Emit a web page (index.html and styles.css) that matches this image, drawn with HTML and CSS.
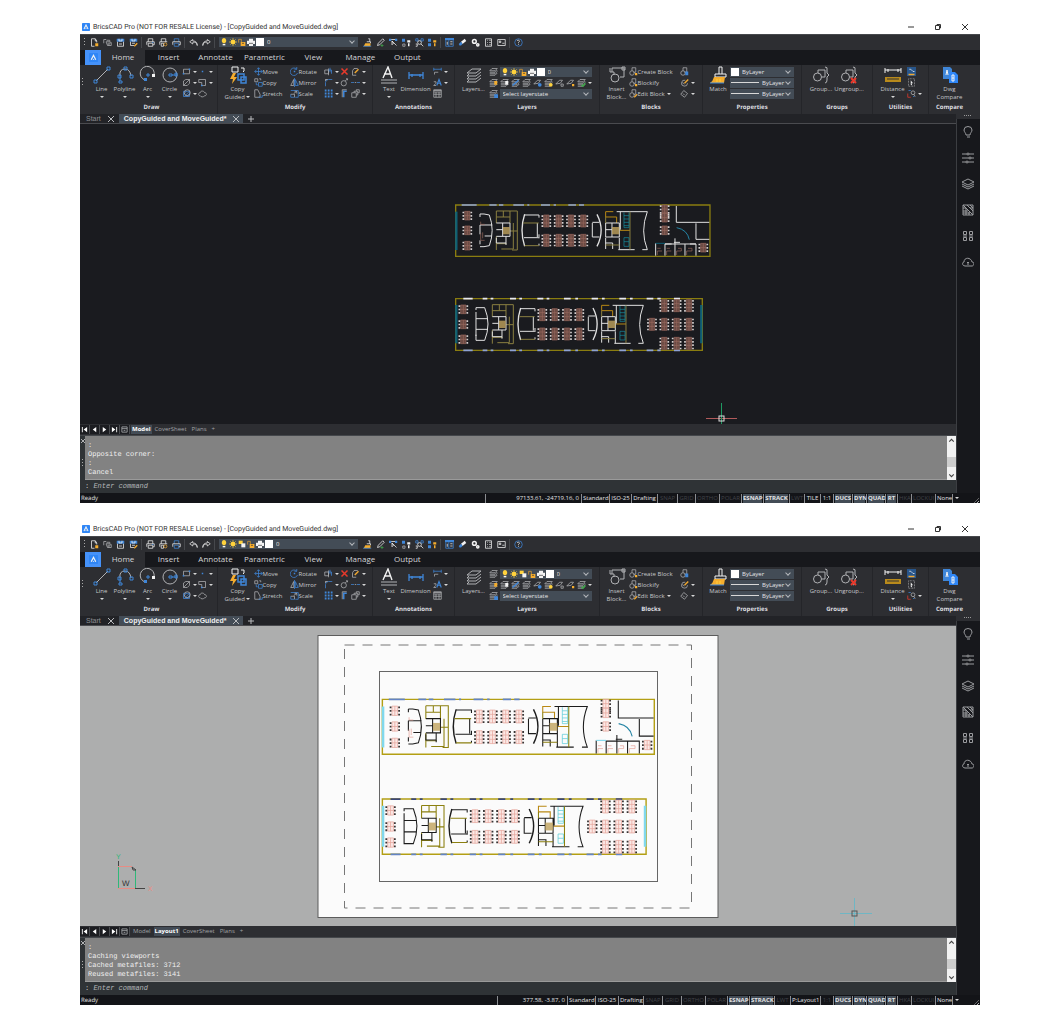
FILE: index.html
```html
<!DOCTYPE html>
<html lang="en">
<head>
<meta charset="utf-8">
<title>BricsCAD Pro</title>
<link rel="stylesheet" href="styles.css">
<script src="app.js" defer></script>
</head>
<body>

<svg class="sprite" aria-hidden="true">
  <!-- small icons, 12 x 12 -->
  <symbol id="app" viewBox="0 0 12 12"><rect class="fill-brand" width="12" height="12" rx="1"/><path class="white" stroke-width="1.6" d="M3 9l3-6 3 6M6 8v1"/></symbol>
  <symbol id="new" viewBox="0 0 12 12"><path class="white" d="M6 11H2V1h5l2 3v2M7 1v3h2"/><path class="fill-orange" d="M7 7h4v4H7z"/></symbol>
  <symbol id="open" viewBox="0 0 12 12"><path d="M1 7V2h3l1 1h4v2M4 5h4l3 1v4H6z"/><path d="M6 7h4M6 9h3"/></symbol>
  <symbol id="save" viewBox="0 0 12 12"><path class="fill-blue" d="M1 1h10v4H1z"/><path class="white" d="M2 5v6h8V5M4 1v3h4V1M4 8h4"/></symbol>
  <symbol id="saveas" viewBox="0 0 12 12"><path class="fill-blue" d="M1 1h10v4H1z"/><path class="white" d="M2 5v5h5M4 1v3h4V1M4 7h4"/><path class="orange" stroke-width="2" d="M7 11l4-4"/></symbol>
  <symbol id="print" viewBox="0 0 12 12"><path class="white" d="M3 5V1h6v4M1 9V5h10v4H9M3 7h6v4H3z"/><path class="blue" d="M8 6h2"/></symbol>
  <symbol id="preview" viewBox="0 0 12 12"><path class="white" d="M3 5V1h6v4M1 9V5h10M3 7h3v4H3z"/><circle class="orange" cx="8.500" cy="8.500" r="2"/></symbol>
  <symbol id="publish" viewBox="0 0 12 12"><path class="blue" d="M3 5V1h6v4M3 7h6v4H3z"/><path class="white" d="M1 9V5h10v4H9"/></symbol>
  <symbol id="undo" viewBox="0 0 12 12"><path class="white" d="M5 2L1 5l4 3V6c3-1 5 0 6 4 0-4-2-6-6-6z"/></symbol>
  <symbol id="redo" viewBox="0 0 12 12"><path class="white" d="M7 2l4 3-4 3V6c-3-1-5 0-6 4 0-4 2-6 6-6z"/></symbol>
  <symbol id="bulb" viewBox="0 0 12 12"><path class="fill-yellow" d="M6 0a4 4 0 00-2 7v1h4V7a4 4 0 00-2-7z"/><path class="white" stroke-width="2" d="M4 10h4"/></symbol>
  <symbol id="sun" viewBox="0 0 12 12"><circle class="fill-yellow" cx="6" cy="6" r="3.500"/><path class="yellow" d="M6 0v12M0 6h12M2 2l8 8M10 2l-8 8"/></symbol>
  <symbol id="vpfreeze" viewBox="0 0 12 12"><path class="fill-yellow" d="M1 1h6v5H1z"/><path class="fill-white" d="M5 5h6v6H5z"/></symbol>
  <symbol id="lock" viewBox="0 0 12 12"><path class="orange" d="M1 7V2h4v4"/><path class="fill-orange" d="M4 6h7v6H4z"/><path class="ink" d="M6 8h3"/></symbol>
  <symbol id="plot" viewBox="0 0 12 12"><path class="fill-white" d="M3 1h6v3h3v5H9v3H3V9H0V4h3z"/><path class="ink" d="M3 8h6"/></symbol>
  <symbol id="brush" viewBox="0 0 12 12"><path class="white" d="M7 1h2v4M5 5h5v2"/><path class="fill-orange" d="M3 7h7v4H1z"/><path class="blue" d="M0 11h11"/></symbol>
  <symbol id="pen" viewBox="0 0 12 12"><path class="white" d="M2 10l1-3 6-6 2 2-6 6z"/><path class="green" d="M8 8v4M6 10h4"/></symbol>
  <symbol id="qselect" viewBox="0 0 12 12"><path class="fill-blue" d="M0 1h3v3H0zM8 1h3v3H8z"/><path class="white" d="M3 2h5M4 4l6 6M4 4v5l2-2z"/></symbol>
  <symbol id="isolate" viewBox="0 0 12 12"><path class="fill-blue" d="M0 1h4v4H0z"/><path d="M1 8h3v3H1z"/><path class="fill-white" d="M7 3h4v3H7zM8 7h2v4H8z"/></symbol>
  <symbol id="zoomsel" viewBox="0 0 12 12"><path class="blue" d="M1 1h3v3H1zM8 1h3v3H8z"/><circle class="white" cx="6" cy="6" r="2.500"/><path class="white" d="M8 8l3 3M1 8h2v3H1"/></symbol>
  <symbol id="unisolate" viewBox="0 0 12 12"><path class="fill-blue" d="M0 1h4v4H0zM0 7h4v4H0z"/><path class="fill-orange" d="M7 3h4v3H7zM8 7h2v4H8z"/></symbol>
  <symbol id="props" viewBox="0 0 12 12"><path class="fill-blue" d="M0 0h12v3H0z"/><path class="blue" d="M1 3v8h10V3M5 3v8"/><path class="white" d="M7 5h3M7 8h3M3 5v4"/></symbol>
  <symbol id="eraser" viewBox="0 0 12 12"><path class="fill-white" d="M4 5l5-4 2 3-5 4z"/><path class="fill-blue" d="M1 8l3-3 2 3-2 2H2z"/></symbol>
  <symbol id="gear" viewBox="0 0 12 12"><circle class="white" stroke-width="2" cx="4.500" cy="4.500" r="2.500"/><circle class="white" stroke-width="2" cx="9" cy="9" r="1.500"/></symbol>
  <symbol id="list" viewBox="0 0 12 12"><path class="white" d="M2 1h8v10H2zM4 3h1M4 6h1M4 9h1M7 3h2M7 6h2M7 9h2"/></symbol>
  <symbol id="panel" viewBox="0 0 12 12"><path class="white" d="M1 2h10v8H1zM3 4h2v2H3zM7 7h3"/></symbol>
  <symbol id="help" viewBox="0 0 12 12"><circle class="blue" cx="6" cy="6" r="5"/><path class="white" d="M4 4c1-2 4-1 3 1L6 6v1M6 8v1"/></symbol>

  <symbol id="rect" viewBox="0 0 12 12"><path d="M2 3h8v6H2z"/><path class="fill-blue" d="M1 8h2v2H1zM9 2h2v2H9z"/></symbol>
  <symbol id="point" viewBox="0 0 12 12"><path class="fill-blue" d="M5 5h2v2H5z"/></symbol>
  <symbol id="ellipse" viewBox="0 0 12 12"><path d="M2 10V4l3-2h5v5L7 10zM2 10l8-8"/></symbol>
  <symbol id="region" viewBox="0 0 12 12"><path d="M1 2h9v8H7M1 2v4h4v4h2"/><path class="fill-blue" d="M4 9h2v2H4z"/></symbol>
  <symbol id="hatch" viewBox="0 0 12 12"><path class="blue" d="M2 3h8v7H2zM2 7l4-4M3 10l7-7M6 10l4-4"/><circle cx="7" cy="5" r="4"/></symbol>
  <symbol id="cloud" viewBox="0 0 12 12"><path d="M3 9C0 9 0 5 3 5c0-3 5-3 6 0 3 0 3 4 0 4-2 2-5 2-6 0z"/></symbol>

  <symbol id="move" viewBox="0 0 12 12"><path class="blue" d="M6 1v10M1 6h10M4 3l2-2 2 2M4 9l2 2 2-2M3 4L1 6l2 2M9 4l2 2-2 2"/></symbol>
  <symbol id="copy" viewBox="0 0 12 12"><path d="M1 1h4v4H1zM7 1h2v2"/><path class="blue" d="M6 6h5v5H6zM3 6v3h2"/></symbol>
  <symbol id="stretch" viewBox="0 0 12 12"><path d="M1 11V1h4l3 6v4z"/><path class="blue" d="M6 11h5V8"/></symbol>
  <symbol id="rotate" viewBox="0 0 12 12"><path class="blue" d="M10 8a5 5 0 11-1-5M9 0v3H6"/><path class="fill-blue" d="M5 5h2v2H5z"/></symbol>
  <symbol id="mirror" viewBox="0 0 12 12"><path d="M5 2v8H1z"/><path class="blue" d="M7 2v8h4zM6 0v12"/></symbol>
  <symbol id="scale" viewBox="0 0 12 12"><path class="blue" d="M1 7v4h5M1 2h10v9H7"/><path d="M1 7h5v4M5 6l4-3M6 3h3v3"/></symbol>
  <symbol id="trim" viewBox="0 0 12 12"><path d="M1 4h5v5H1zM6 2v9"/><path class="blue" d="M6 4h4v5M8 1v6"/></symbol>
  <symbol id="delete" viewBox="0 0 12 12"><path class="red" stroke-width="2" d="M2 2l8 8M10 2l-8 8"/></symbol>
  <symbol id="edit" viewBox="0 0 12 12"><path d="M9 2H4L2 5v6h5"/><path class="orange" stroke-width="2" d="M5 8l5-5"/></symbol>
  <symbol id="fillet" viewBox="0 0 12 12"><path class="blue" d="M2 11V6q0-4 4-4h5"/><path d="M2 2h1M2 4V2h3"/></symbol>
  <symbol id="offset" viewBox="0 0 12 12"><circle cx="5" cy="7" r="3.500"/><path d="M7 4l3-3M8 1h2v2"/></symbol>
  <symbol id="break" viewBox="0 0 12 12"><path class="blue" d="M0 6h4M8 6h4"/><path d="M5 6h2"/></symbol>
  <symbol id="array" viewBox="0 0 12 12"><path class="blue" stroke-width="2.400" stroke-dasharray="2.400 1.600" d="M1 2h11M1 6h11M1 10h11"/></symbol>
  <symbol id="align" viewBox="0 0 12 12"><path class="blue" stroke-width="2" d="M5 11V3h4"/><path d="M3 11V1h6"/></symbol>
  <symbol id="explode" viewBox="0 0 12 12"><path d="M1 5h6v6H1zM4 5V3h5v5H7M7 3V1h4v4H9"/></symbol>

  <symbol id="leader" viewBox="0 0 12 12"><path class="blue" d="M1 1v4M11 1v4M1 3h10"/><path d="M2 10V7h5"/></symbol>
  <symbol id="textstyle" viewBox="0 0 12 12"><path d="M1 5h3v2L1 10h3"/><path class="blue" stroke-width="1.500" d="M5 10l3-8 3 8M6 7h4"/></symbol>
  <symbol id="table" viewBox="0 0 12 12"><path d="M1 1h10v10H1zM1 4h10M1 7h10M4 4v7M8 4v7"/><path d="M1 2h10"/></symbol>

  <symbol id="lay" viewBox="0 0 12 12"><path d="M4 2h7L8 5H1zM1 7h7l3-3M1 9h7l3-3M1 11h7l3-3"/></symbol>
  <symbol id="lay-o" viewBox="0 0 12 12"><use href="#lay"/><path class="fill-orange" d="M7 4h4v5H7z"/></symbol>
  <symbol id="lay-w" viewBox="0 0 12 12"><use href="#lay"/><path class="fill-white" d="M7 4h4v5H7z"/></symbol>
  <symbol id="lay-b" viewBox="0 0 12 12"><use href="#lay"/><path class="blue" stroke-width="2" d="M2 10l8-7"/></symbol>
  <symbol id="lay-f" viewBox="0 0 12 12"><path d="M1 8l5-5h4L7 7z"/><circle class="fill-blue" cx="9" cy="9" r="2.500"/></symbol>
  <symbol id="lay-y" viewBox="0 0 12 12"><use href="#lay"/><circle class="fill-yellow" cx="9" cy="9" r="2.500"/></symbol>
  <symbol id="lay-l" viewBox="0 0 12 12"><path d="M1 8l5-5h4L7 7z"/><path d="M8 8h3v3H8z"/></symbol>
  <symbol id="lay-u" viewBox="0 0 12 12"><path d="M1 8l5-5h4L7 7z"/><path class="fill-orange" d="M8 8h3v3H8z"/></symbol>
  <symbol id="lay-g" viewBox="0 0 12 12"><use href="#lay"/><path class="green" stroke-width="2" d="M6 9l2 2 3-4"/></symbol>
  <symbol id="lay-s" viewBox="0 0 12 12"><use href="#lay"/><path class="fill-blue" d="M7 7h5v5H7z"/></symbol>

  <symbol id="block" viewBox="0 0 12 12"><circle cx="4" cy="8" r="3"/><path d="M4 1h5v6H6M4 1v4"/></symbol>
  <symbol id="block-n" viewBox="0 0 12 12"><use href="#block"/><path class="fill-orange" d="M8 8h3v3H8z"/></symbol>
  <symbol id="block-e" viewBox="0 0 12 12"><use href="#block"/><path class="orange" stroke-width="2" d="M7 11l4-4"/></symbol>
  <symbol id="block-b" viewBox="0 0 12 12"><use href="#block"/><path class="fill-blue" d="M7 6h4v5H7z"/></symbol>
  <symbol id="tag" viewBox="0 0 12 12"><path d="M1 7l4-5 5 4-4 5zM4 6l2 2"/></symbol>
  <symbol id="tag-e" viewBox="0 0 12 12"><path d="M10 7a4 4 0 11-3-4M3 6l3 2"/><path class="orange" stroke-width="2" d="M6 7l5-5"/></symbol>

  <symbol id="qcalc" viewBox="0 0 12 12"><path class="fill-deep" d="M0 0h12v12H0z"/><path class="white" d="M3 3h2M5 3l3 3h2"/><path class="orange" stroke-width="2" d="M2 10h8"/></symbol>
  <symbol id="pick" viewBox="0 0 12 12"><path d="M2 1h8v10H2z" stroke-dasharray="1 1"/><path class="fill-white" d="M5 3l3 4H6l1 3-2-1z"/></symbol>
  <symbol id="find" viewBox="0 0 12 12"><path class="red" d="M1 6v5h4"/><path class="blue" d="M2 2h3M8 10h2"/><circle cx="8" cy="5" r="2.500"/><path d="M9 7l2 3"/></symbol>

  <!-- large icons, 18 x 18 -->
  <symbol id="line" viewBox="0 0 18 18"><path d="M3 15L15 3"/><path class="blue" d="M1 14h3v3H1zM14 1h3v3h-3z"/></symbol>
  <symbol id="polyline" viewBox="0 0 18 18"><path d="M4 10Q3 3 9 3q5 0 6 7"/><path class="blue" d="M4 10v5M2 9h3v3H2zM8 1h3v3H8zM14 9h3v3h-3zM3 15h3v2H3z"/></symbol>
  <symbol id="arc" viewBox="0 0 18 18"><path d="M6 14A7 7 0 1115 9"/><path class="blue" d="M8 8h2v2H8z"/><path class="fill-white" d="M13 8h3v3h-3z"/><path class="fill-blue" d="M5 12h3v3H5z"/></symbol>
  <symbol id="circle" viewBox="0 0 18 18"><circle cx="9" cy="9" r="7"/><path class="blue" d="M8 8h3v2H8zM11 9h5M14 7h2v3h-2z"/></symbol>
  <symbol id="copyguided" viewBox="0 0 18 18"><path class="white" d="M3 1h6v5H3zM12 2h3v3M14 6l1-1"/><path class="fill-orange" d="M4 7L1 13h3l-1 5 5-7H5l2-4z"/><path class="blue" stroke-width="1.500" d="M9 8h6v6H9zM12 11h5v6h-5z"/></symbol>
  <symbol id="text" viewBox="0 0 18 18"><path class="white" stroke-width="1.400" d="M3 12L8 1l4 11M4 8h7"/><path d="M1 14h16M1 17h16"/></symbol>
  <symbol id="dimension" viewBox="0 0 18 18"><path class="blue" stroke-width="1.300" d="M2 6v7M16 6v7M2 9h14M5 8v3M13 8v3"/></symbol>
  <symbol id="layers" viewBox="0 0 18 18"><path d="M7 3h9l-5 4H2zM16 6l-5 4H2l2-2M16 9l-5 4H2l2-2M16 12l-5 4H2l2-2"/></symbol>
  <symbol id="insert" viewBox="0 0 18 18"><path d="M4 2h12v9h-4M4 2v4M2 6h4v3M2 2v4"/><circle cx="7" cy="12" r="4"/><path d="M14 1h3v3h-3z"/></symbol>
  <symbol id="match" viewBox="0 0 18 18"><path class="white" d="M10 1h3v7M10 1v7M6 8h11v3H6z"/><path class="fill-orange" d="M5 11h11l-1 6H1q3-2 4-6z"/><path class="yellow" d="M8 13v3M11 13v3"/><path class="blue" d="M1 17h14"/></symbol>
  <symbol id="group" viewBox="0 0 18 18"><circle cx="5.500" cy="11" r="4"/><path d="M6 4h7v7h-3M6 4v3M13 1q3 0 2 3v3l2 2-2 2v3q0 3-2 3"/></symbol>
  <symbol id="ungroup" viewBox="0 0 18 18"><use href="#group"/><path class="red" stroke-width="2" d="M11 12l5 5M16 12l-5 5"/></symbol>
  <symbol id="distance" viewBox="0 0 18 18"><path class="white" d="M1 2v5M17 2v5M1 4h16M4 3v3M14 3v3"/><path class="fill-ochre" d="M1 11h16v5H1z"/><path class="ink" d="M3 13h12"/></symbol>
  <symbol id="compare" viewBox="0 0 18 18"><path class="fill-blue" d="M2 1h7l2 2v10H2z"/><path class="fill-brand" d="M8 6h6l3 3v8H8z"/><path class="white" d="M5 9l1-5 1 5M11 9h2v6h-2zM11 12h2"/></symbol>

  <!-- side panel icons, 12 x 12 -->
  <symbol id="s-bulb" viewBox="0 0 12 12"><path d="M4 9C4 7 2 6 2 4a4 3.500 0 018 0c0 2-2 3-2 5zM5 11h3"/></symbol>
  <symbol id="s-sliders" viewBox="0 0 12 12"><path d="M0 2h5M7 2h5M0 6h7M9 6h3M0 10h4M6 10h6"/><circle cx="6" cy="2" r="1"/><circle cx="8" cy="6" r="1"/><circle cx="5" cy="10" r="1"/></symbol>
  <symbol id="s-layers" viewBox="0 0 12 12"><path d="M6 1l6 3-6 3-6-3zM0 6l6 3 6-3M0 8l6 3 6-3"/></symbol>
  <symbol id="s-hatch" viewBox="0 0 12 12"><path d="M1 1h10v10H1zM1 1l10 10M5 1l6 6M1 4h3M1 7h5M1 9h7M4 4v7M7 8v3M8 1l3 3M8 4h3"/></symbol>
  <symbol id="s-blocks" viewBox="0 0 12 12"><path d="M1.500 1.500h3v3h-3zM7.500 1.500h3v3h-3zM1.500 7.500h3v3h-3zM7.500 7.500h3v3h-3zM1 6h4M7 6h4"/></symbol>
  <symbol id="s-cloud" viewBox="0 0 12 12"><path d="M3 10C0 10 0 6 2 6c0-5 7-5 8 0 3 0 2 4 0 4zM6 9V6M5 7l1-1 1 1"/></symbol>

  <!-- desk clusters, centred on the origin -->
  <g id="desk4">
    <path class="desk top" d="M-8-18H8V18H-8zM0-18V18M-8-6H8M-8 6H8"/>
    <path class="seat" d="M-12-17V20M12-17V20"/>
  </g>
  <g id="desk3">
    <path class="desk top" d="M-8-13H8V13H-8zM0-13V13M-8 0H8"/>
    <path class="seat" d="M-12-12V14M12-12V14"/>
  </g>

  <!-- rooms common to both floors -->
  <g id="rooms">
    <path class="olive" d="M139 48H202V165H186M139 48V84M180 48V84M139 66H180M160 48V66M180 108H202M139 124V165M139 146H170M190 84V162H154"/>
    <path class="wall" d="M139 84H180V124H139M158 84V124M139 104H158M139 128V144H168M168 124V150"/>
    <path class="stair" d="M159 96h20v22h-20z"/>
    <path class="wall thick" d="M224 58Q208 106 224 154"/>
    <path class="wall" d="M224 60H267V68M262 84V126M267 118V130M222 128H266M267 146V152"/>
    <path class="olive" d="M220 84H266M224 152H267"/>
    <use href="#desk4" x="289" y="78"/><use href="#desk4" x="326" y="78"/><use href="#desk4" x="363" y="78"/><use href="#desk4" x="400" y="78"/>
    <use href="#desk4" x="289" y="136"/><use href="#desk4" x="326" y="136"/><use href="#desk4" x="363" y="136"/><use href="#desk4" x="400" y="136"/>
    <path class="wall" d="M427 84V126H448M427 82H448"/>
    <path class="wall thick" d="M441 58Q466 106 441 154"/>
    <path class="amber" d="M490 50H467V66H500V84M509 106H540"/>
    <path class="wall" d="M467 84H508V126H467V84M486 84V126M467 104H486M467 128V162M467 144H488V162M500 50H592Q570 108 592 164H577M505 164H554M508 128V164M511 50V104"/>
    <path class="olive" d="M467 66V84M467 150H508M540 50V164"/>
    <path class="stair" d="M486 96h22v22h-22z"/>
    <path class="cyan" d="M522 52V98H537V52M522 62H537M522 72H537M522 82H537M522 92H537M522 128H537V154H522zM522 140H537"/>
  </g>

  <g id="floor-a">
    <path class="shell" d="M17 30H780V184H17z"/>
    <path class="glazing" d="M35 30H80M118 30H140M147 30H160M190 30H222M232 30H238M273 30H300M311 30H318M355 30H378M387 30H402"/>
    <path class="pane" d="M19 50V165"/>
    <use href="#desk3" x="52" y="62"/><use href="#desk3" x="52" y="106"/><use href="#desk3" x="52" y="152"/>
    <path class="wall" d="M90 57H102L118 60Q135 106 118 152L102 155H90M90 57V66M90 90H127M90 90V118M104 123H125M90 136V148"/>
    <path class="desk" d="M92 80V88H104M92 114V136H104M98 112V130"/>
    <use href="#rooms"/>
    <use href="#desk4" x="644" y="48"/><use href="#desk3" x="644" y="68"/><use href="#desk3" x="644" y="106"/>
    <path class="wall" d="M679 33V82H778M738 85V133H778M617 182V145M645 182V147H665M675 182V130M672 142H690M705 182V147M738 182V147H720M645 147H738"/>
    <path class="pane thin" d="M617 145H645"/>
    <path class="arc" d="M680 98Q712 104 718 134"/>
    <path class="desk" d="M622 180V168H636M622 160H632M650 180V168H664M650 160H660M680 180V168H694V160H684M710 180V168H726V160H714"/>
    <use href="#desk3" x="760" y="158"/>
  </g>

  <g id="floor-b">
    <path class="shell" d="M17 26H757V181H17z"/>
    <path class="glazing alt" d="M40 26H68M98 26H112M122 26H130M180 26H198M208 26H216M262 26H280M290 26H298M342 26H362M376 26H384M425 26H444M456 26H464M508 26H528M540 26H548M590 26H610M622 26H632M672 26H690"/>
    <path class="glazing" d="M40 181H68M98 181H112M122 181H130M180 181H198M208 181H216M262 181H280M290 181H298M342 181H362M376 181H384M425 181H444M456 181H464M508 181H528M540 181H548M590 181H610M622 181H632M672 181H690"/>
    <path class="pane" d="M19 45V160M754 45V160"/>
    <use href="#desk3" x="40" y="58"/><use href="#desk3" x="40" y="103"/><use href="#desk3" x="40" y="148"/>
    <path class="wall" d="M78 60V53H104Q124 102 104 151H78V134M78 66V138M78 86H114M78 118H114"/>
    <use href="#rooms" x="-12" y="-4"/>
    <use href="#desk4" x="606" y="103"/>
    <use href="#desk4" x="643" y="47"/><use href="#desk4" x="680" y="47"/><use href="#desk4" x="717" y="47"/>
    <use href="#desk4" x="643" y="103"/><use href="#desk4" x="680" y="103"/><use href="#desk4" x="717" y="103"/>
    <use href="#desk4" x="643" y="160"/><use href="#desk4" x="680" y="160"/><use href="#desk4" x="717" y="160"/>
  </g>
</svg>

<!-- title bar, toolbar and ribbon, shared by every drawing window -->
<template id="chrome">
  <header class="titlebar">
    <svg class="app-icon"><use href="#app"/></svg>
    <h2 class="title">BricsCAD Pro (NOT FOR RESALE License) - [CopyGuided and MoveGuided.dwg]</h2>
    <div class="window-buttons">
      <button aria-label="Minimize"><svg viewBox="0 0 8 8"><path d="M1 4h6"/></svg></button>
      <button aria-label="Restore"><svg viewBox="0 0 8 8"><path d="M1.500 2.500h4v4h-4zM3 2V1.500h3.500V5H6"/></svg></button>
      <button aria-label="Close"><svg viewBox="0 0 8 8"><path d="M1 1l6 6M7 1L1 7"/></svg></button>
    </div>
  </header>

  <div class="toolbar">
    <span class="grip"></span>
    <button class="tool" aria-label="New"><svg><use href="#new"/></svg></button>
    <button class="tool" aria-label="Open"><svg><use href="#open"/></svg></button>
    <button class="tool" aria-label="Save"><svg><use href="#save"/></svg></button>
    <button class="tool" aria-label="Save as"><svg><use href="#saveas"/></svg></button>
    <span class="divider"></span>
    <button class="tool" aria-label="Print"><svg><use href="#print"/></svg></button>
    <button class="tool" aria-label="Print preview"><svg><use href="#preview"/></svg></button>
    <button class="tool" aria-label="Publish"><svg><use href="#publish"/></svg></button>
    <span class="divider"></span>
    <button class="tool" aria-label="Undo"><svg><use href="#undo"/></svg></button>
    <button class="tool" aria-label="Redo"><svg><use href="#redo"/></svg></button>
    <span class="divider"></span>
    <div class="combo combo-wide">
      <svg><use href="#bulb"/></svg><svg><use href="#sun"/></svg><svg class="vp-only"><use href="#vpfreeze"/></svg><svg><use href="#lock"/></svg><svg><use href="#plot"/></svg><i class="swatch"></i>
      <select aria-label="Current layer"><option>0</option></select>
    </div>
    <button class="tool" aria-label="Match properties"><svg><use href="#brush"/></svg></button>
    <button class="tool" aria-label="Edit"><svg><use href="#pen"/></svg></button>
    <button class="tool" aria-label="Quick select"><svg><use href="#qselect"/></svg></button>
    <button class="tool" aria-label="Isolate"><svg><use href="#isolate"/></svg></button>
    <button class="tool" aria-label="Zoom to selection"><svg><use href="#zoomsel"/></svg></button>
    <button class="tool" aria-label="Show all"><svg><use href="#unisolate"/></svg></button>
    <span class="divider"></span>
    <button class="tool" aria-label="Properties"><svg><use href="#props"/></svg></button>
    <button class="tool" aria-label="Purge"><svg><use href="#eraser"/></svg></button>
    <button class="tool" aria-label="Settings"><svg><use href="#gear"/></svg></button>
    <button class="tool" aria-label="Explorer"><svg><use href="#list"/></svg></button>
    <button class="tool" aria-label="Customize"><svg><use href="#panel"/></svg></button>
    <span class="divider"></span>
    <button class="tool" aria-label="Help"><svg><use href="#help"/></svg></button>
  </div>

  <nav class="ribbon-tabs">
    <button class="logo" aria-label="Application menu"><svg><use href="#app"/></svg></button>
    <button class="ribbon-tab is-active">Home</button>
    <button class="ribbon-tab">Insert</button>
    <button class="ribbon-tab">Annotate</button>
    <button class="ribbon-tab">Parametric</button>
    <button class="ribbon-tab">View</button>
    <button class="ribbon-tab">Manage</button>
    <button class="ribbon-tab">Output</button>
  </nav>

  <div class="ribbon">
    <span class="grip"></span>
    <section class="group g-draw">
      <div class="tools">
        <button class="big"><svg><use href="#line"/></svg>Line<i class="caret"></i></button>
        <button class="big"><svg><use href="#polyline"/></svg>Polyline<i class="caret"></i></button>
        <button class="big"><svg><use href="#arc"/></svg>Arc<i class="caret"></i></button>
        <button class="big"><svg><use href="#circle"/></svg>Circle<i class="caret"></i></button>
        <div class="stack">
          <button class="small" aria-label="Rectangle"><svg><use href="#rect"/></svg><i class="caret"></i></button>
          <button class="small" aria-label="Ellipse"><svg><use href="#ellipse"/></svg><i class="caret"></i></button>
          <button class="small" aria-label="Hatch"><svg><use href="#hatch"/></svg><i class="caret"></i></button>
        </div>
        <div class="stack">
          <button class="small" aria-label="Point"><svg><use href="#point"/></svg><i class="caret"></i></button>
          <button class="small" aria-label="Region"><svg><use href="#region"/></svg><i class="caret"></i></button>
          <button class="small" aria-label="Revision cloud"><svg><use href="#cloud"/></svg></button>
        </div>
      </div>
      <h3>Draw</h3>
    </section>

    <section class="group g-modify">
      <div class="tools">
        <button class="big"><svg><use href="#copyguided"/></svg>Copy<span>Guided <i class="caret"></i></span></button>
        <div class="stack">
          <button class="small"><svg><use href="#move"/></svg>Move</button>
          <button class="small"><svg><use href="#copy"/></svg>Copy</button>
          <button class="small"><svg><use href="#stretch"/></svg>Stretch</button>
        </div>
        <div class="stack">
          <button class="small"><svg><use href="#rotate"/></svg>Rotate</button>
          <button class="small"><svg><use href="#mirror"/></svg>Mirror</button>
          <button class="small"><svg><use href="#scale"/></svg>Scale</button>
        </div>
        <div class="stack">
          <button class="small" aria-label="Trim"><svg><use href="#trim"/></svg><i class="caret"></i></button>
          <button class="small" aria-label="Fillet"><svg><use href="#fillet"/></svg><i class="caret"></i></button>
          <button class="small" aria-label="Array"><svg><use href="#array"/></svg><i class="caret"></i></button>
        </div>
        <div class="stack">
          <button class="small" aria-label="Erase"><svg><use href="#delete"/></svg></button>
          <button class="small" aria-label="Offset"><svg><use href="#offset"/></svg></button>
          <button class="small" aria-label="Align"><svg><use href="#align"/></svg></button>
        </div>
        <div class="stack">
          <button class="small" aria-label="Edit polyline"><svg><use href="#edit"/></svg><i class="caret"></i></button>
          <button class="small" aria-label="Break"><svg><use href="#break"/></svg><i class="caret"></i></button>
          <button class="small" aria-label="Explode"><svg><use href="#explode"/></svg><i class="caret"></i></button>
        </div>
      </div>
      <h3>Modify</h3>
    </section>

    <section class="group g-annotations">
      <div class="tools">
        <button class="big"><svg><use href="#text"/></svg>Text<i class="caret"></i></button>
        <button class="big"><svg><use href="#dimension"/></svg>Dimension</button>
        <div class="stack">
          <button class="small" aria-label="Leader"><svg><use href="#leader"/></svg><i class="caret"></i></button>
          <button class="small" aria-label="Text style"><svg><use href="#textstyle"/></svg><i class="caret"></i></button>
          <button class="small" aria-label="Table"><svg><use href="#table"/></svg></button>
        </div>
      </div>
      <h3>Annotations</h3>
    </section>

    <section class="group g-layers">
      <div class="tools">
        <button class="big"><svg><use href="#layers"/></svg>Layers...</button>
        <div class="stack">
          <div class="row">
            <button class="small" aria-label="Set layer"><svg><use href="#lay"/></svg></button>
            <div class="combo">
              <svg><use href="#bulb"/></svg><svg><use href="#sun"/></svg><svg class="vp-only"><use href="#vpfreeze"/></svg><svg><use href="#lock"/></svg><svg><use href="#plot"/></svg><i class="swatch"></i>
              <select aria-label="Layer"><option>0</option></select>
            </div>
          </div>
          <div class="row spread">
            <button class="small" aria-label="Layer off"><svg><use href="#lay-o"/></svg></button>
            <button class="small" aria-label="Layers on"><svg><use href="#lay-w"/></svg></button>
            <button class="small" aria-label="Isolate layer"><svg><use href="#lay-b"/></svg></button>
            <button class="small" aria-label="Unisolate layer"><svg><use href="#lay"/></svg></button>
            <button class="small" aria-label="Freeze layer"><svg><use href="#lay-f"/></svg></button>
            <button class="small" aria-label="Thaw layers"><svg><use href="#lay-y"/></svg></button>
            <button class="small" aria-label="Lock layer"><svg><use href="#lay-l"/></svg></button>
            <button class="small" aria-label="Unlock layer"><svg><use href="#lay-u"/></svg></button>
            <button class="small" aria-label="Layer tools"><svg><use href="#lay-g"/></svg><i class="caret"></i></button>
          </div>
          <div class="row">
            <button class="small" aria-label="Layer states"><svg><use href="#lay-s"/></svg></button>
            <div class="combo"><select aria-label="Layer state"><option>Select layerstate</option></select></div>
          </div>
        </div>
      </div>
      <h3>Layers</h3>
    </section>

    <section class="group g-blocks">
      <div class="tools">
        <button class="big"><svg><use href="#insert"/></svg>Insert<span>Block...</span></button>
        <div class="stack">
          <button class="small"><svg><use href="#block-n"/></svg>Create Block</button>
          <button class="small"><svg><use href="#block-n"/></svg>Blockify</button>
          <button class="small"><svg><use href="#block-e"/></svg>Edit Block<i class="caret"></i></button>
        </div>
        <div class="stack">
          <button class="small" aria-label="Write block"><svg><use href="#block-b"/></svg></button>
          <button class="small" aria-label="Edit attributes"><svg><use href="#tag-e"/></svg><i class="caret"></i></button>
          <button class="small" aria-label="Define attributes"><svg><use href="#tag"/></svg><i class="caret"></i></button>
        </div>
      </div>
      <h3>Blocks</h3>
    </section>

    <section class="group g-properties">
      <div class="tools">
        <button class="big"><svg><use href="#match"/></svg>Match</button>
        <div class="stack">
          <div class="combo"><i class="swatch"></i><select aria-label="Color"><option>ByLayer</option></select></div>
          <div class="combo"><i class="rule"></i><select aria-label="Linetype"><option>ByLayer</option></select></div>
          <div class="combo"><i class="rule"></i><select aria-label="Lineweight"><option>ByLayer</option></select></div>
        </div>
      </div>
      <h3>Properties</h3>
    </section>

    <section class="group g-groups">
      <div class="tools">
        <button class="big"><svg><use href="#group"/></svg>Group...</button>
        <button class="big"><svg><use href="#ungroup"/></svg>Ungroup...</button>
      </div>
      <h3>Groups</h3>
    </section>

    <section class="group g-utilities">
      <div class="tools">
        <button class="big"><svg><use href="#distance"/></svg>Distance<i class="caret"></i></button>
        <div class="stack">
          <button class="small" aria-label="Quick properties"><svg><use href="#qcalc"/></svg></button>
          <button class="small" aria-label="Select"><svg><use href="#pick"/></svg></button>
          <button class="small" aria-label="Find"><svg><use href="#find"/></svg><i class="caret"></i></button>
        </div>
      </div>
      <h3>Utilities</h3>
    </section>

    <section class="group g-compare">
      <div class="tools">
        <button class="big"><svg><use href="#compare"/></svg>Dwg<span>Compare</span></button>
      </div>
      <h3>Compare</h3>
    </section>
  </div>
</template>

<template id="side">
  <span class="dots"></span>
  <div class="side-buttons">
    <button aria-label="Tips"><svg><use href="#s-bulb"/></svg></button>
    <button aria-label="Properties"><svg><use href="#s-sliders"/></svg></button>
    <button aria-label="Layers"><svg><use href="#s-layers"/></svg></button>
    <button aria-label="Hatches"><svg><use href="#s-hatch"/></svg></button>
    <button aria-label="Blocks"><svg><use href="#s-blocks"/></svg></button>
    <button aria-label="Cloud"><svg><use href="#s-cloud"/></svg></button>
  </div>
</template>

<template id="doctabs">
  <button class="doc-tab">Start</button><button class="doc-close" aria-label="Close Start"><svg viewBox="0 0 6 6"><path d="M0 0l6 6M6 0L0 6"/></svg></button>
  <div class="doc-active"><button class="doc-tab is-active">CopyGuided and MoveGuided*</button><button class="doc-close" aria-label="Close drawing"><svg viewBox="0 0 6 6"><path d="M0 0l6 6M6 0L0 6"/></svg></button></div>
  <button class="doc-add" aria-label="New tab"><svg viewBox="0 0 6 6"><path d="M3 0v6M0 3h6"/></svg></button>
</template>

<template id="layoutnav">
  <button aria-label="First"><svg viewBox="0 0 8 8"><path d="M1 1h1v6H1zM7 1v6L3 4z"/></svg></button>
  <button aria-label="Previous"><svg viewBox="0 0 8 8"><path d="M6 1v6L2 4z"/></svg></button>
  <button aria-label="Next"><svg viewBox="0 0 8 8"><path d="M2 1v6l4-3z"/></svg></button>
  <button aria-label="Last"><svg viewBox="0 0 8 8"><path d="M6 1h1v6H6zM1 1v6l4-3z"/></svg></button>
  <button aria-label="Layout list"><svg class="outline" viewBox="0 0 8 8"><path d="M1 1h6v6H1zM1 3h6M3 5h2"/></svg></button>
</template>

<template id="scroll">
  <button aria-label="Scroll up"><svg viewBox="0 0 8 8"><path d="M2 5l2-2 2 2"/></svg></button>
  <span class="thumb"></span>
  <button aria-label="Scroll down"><svg viewBox="0 0 8 8"><path d="M2 3l2 2 2-2"/></svg></button>
</template>

<main class="page">
  <article class="window window-model">
    <div data-template="chrome"></div>
    <div class="work">
      <div class="drawing">
        <div class="doc-tabs" data-template="doctabs"></div>
        <svg class="canvas" viewBox="0 0 876 300" role="img" aria-label="Model space">
          <g transform="translate(370 71) scale(.3333)"><use href="#floor-a"/></g>
          <g transform="translate(370 166) scale(.3333)"><use href="#floor-b"/></g>
          <path class="cursor-x" d="M626 294.500H657"/>
          <path class="cursor-y" d="M641.500 279V300"/>
          <rect class="cursor-box" x="639" y="292" width="5" height="5"/>
        </svg>
        <div class="layout-tabs">
          <div class="layout-nav" data-template="layoutnav"></div>
          <button class="is-active">Model</button><button>CoverSheet</button><button>Plans</button><button>+</button>
        </div>
        <div class="console">
          <div class="gutter"><svg viewBox="0 0 4 4"><path d="M0 0l4 4M4 0L0 4"/></svg><span class="grip"></span></div>
          <pre class="log">:
Opposite corner:
:
Cancel</pre>
          <div class="scrollbar" data-template="scroll"></div>
          <label class="prompt">: <input type="text" placeholder="Enter command"></label>
        </div>
      </div>
      <aside class="side" data-template="side"></aside>
    </div>
    <footer class="status status-model">
      <span class="ready">Ready</span>
      <button class="coords">97133.61, -24719.16, 0</button><button>Standard</button><button>ISO-25</button><button>Drafting</button><button class="off">SNAP</button><button class="off">GRID</button><button class="off">ORTHO</button><button class="off">POLAR</button><button class="on"><b>ESNAP</b></button><button class="on"><b>STRACK</b></button><button class="off">LWT</button><button>TILE</button><button>1:1</button><button class="on"><b>DUCS</b></button><button class="on"><b>DYN</b></button><button class="on"><b>QUAD</b></button><button class="on"><b>RT</b></button><button class="off">HKA</button><button class="off">LOCKUI</button><button>None</button><button aria-label="More"><i class="caret"></i></button>
      <span class="resize"></span>
    </footer>
  </article>

  <article class="window window-layout">
    <div data-template="chrome"></div>
    <div class="work">
      <div class="drawing">
        <div class="doc-tabs" data-template="doctabs"></div>
        <svg class="canvas" viewBox="0 0 876 300" role="img" aria-label="Paper space">
          <rect class="paper" x="238" y="9.500" width="400" height="282"/>
          <rect class="margin" x="264.500" y="19" width="347" height="263"/>
          <rect class="viewport" x="299.500" y="45.500" width="278" height="210"/>
          <g transform="translate(296.300 62.700) scale(.3564)"><use href="#floor-a"/></g>
          <g transform="translate(296.300 163.800) scale(.3564)"><use href="#floor-b"/></g>
          <g class="ucs">
            <path class="ucs-y" d="M38.500 241V262M55.500 244V262"/>
            <path class="ucs-x" d="M38 240.500H52M38 262.500H55"/>
            <path class="ucs-k" d="M38.500 235V240M55 262.500H65M52 241l4 3h-3z"/>
            <text class="ucs-ty" x="36" y="233">Y</text>
            <text x="42" y="260">W</text>
            <text class="ucs-tx" x="68" y="265">X</text>
          </g>
          <path class="cursor-x" d="M760 287.500H792"/>
          <path class="cursor-y" d="M774.500 272V300"/>
          <rect class="cursor-box" x="772" y="285" width="5" height="5"/>
        </svg>
        <div class="layout-tabs">
          <div class="layout-nav" data-template="layoutnav"></div>
          <button>Model</button><button class="is-active">Layout1</button><button>CoverSheet</button><button>Plans</button><button>+</button>
        </div>
        <div class="console">
          <div class="gutter"><svg viewBox="0 0 4 4"><path d="M0 0l4 4M4 0L0 4"/></svg><span class="grip"></span></div>
          <pre class="log">:
Caching viewports
Cached metafiles: 3712
Reused metafiles: 3141</pre>
          <div class="scrollbar" data-template="scroll"></div>
          <label class="prompt">: <input type="text" placeholder="Enter command"></label>
        </div>
      </div>
      <aside class="side" data-template="side"></aside>
    </div>
    <footer class="status status-layout">
      <span class="ready">Ready</span>
      <button class="coords">377.58, -3.87, 0</button><button>Standard</button><button>ISO-25</button><button>Drafting</button><button class="off">SNAP</button><button class="off">GRID</button><button class="off">ORTHO</button><button class="off">POLAR</button><button class="on"><b>ESNAP</b></button><button class="on"><b>STRACK</b></button><button class="off">LWT</button><button>P:Layout1</button><button class="off">1:1</button><button class="on"><b>DUCS</b></button><button class="on"><b>DYN</b></button><button class="on"><b>QUAD</b></button><button class="on"><b>RT</b></button><button class="off">HKA</button><button class="off">LOCKUI</button><button>None</button><button aria-label="More"><i class="caret"></i></button>
      <span class="resize"></span>
    </footer>
  </article>
</main>
</body>
</html>
```
FILE: styles.css
```css
:root {
  --bar: #2d2e32;
  --dark: #17181c;
  --field: #434c56;
  --text: #c6c7ca;
  --blue: #3f86d8;
}

* { box-sizing: border-box; }

body {
  margin: 0;
  background: #fff;
  color: var(--text);
  font: 6px/8px "Open Sans", "Noto Sans", sans-serif;
  text-rendering: geometricPrecision;
}

button, input, select {
  margin: 0;
  padding: 0;
  border: 0;
  background: none;
  color: inherit;
  font: inherit;
}

h2, h3, pre { margin: 0; }

svg { display: block; flex: none; fill: none; stroke: #b0b1b4; stroke-width: 1; }
.sprite { position: absolute; width: 0; height: 0; }

.white { stroke: #f2f2f2; }
.blue { stroke: var(--blue); }
.orange { stroke: #f0a830; }
.yellow { stroke: #ffd23c; }
.green { stroke: #3fa64a; }
.red { stroke: #e8392b; }
.ink { stroke: #333; }
.fill-white { fill: #f2f2f2; stroke: none; }
.fill-blue { fill: var(--blue); stroke: none; }
.fill-brand { fill: #2f86f6; stroke: none; }
.fill-deep { fill: #28568c; stroke: none; }
.fill-orange { fill: #f5ad2e; stroke: none; }
.fill-yellow { fill: #ffd23c; stroke: none; }
.fill-ochre { fill: #b88a1c; stroke: none; }

.page {
  display: flex;
  flex-direction: column;
  gap: 19px;
  padding: 20px 80px;
}

.window { background: var(--dark); }

/* Title bar */
.titlebar {
  display: flex;
  align-items: center;
  height: 14px;
  padding: 0 2px;
  background: #fff;
}
.app-icon { width: 8px; height: 8px; }
.title {
  flex: 1;
  padding-left: 3px;
  color: #333;
  font: 400 7px/9px Roboto, "Open Sans", sans-serif;
}
.window-buttons { display: flex; }
.window-buttons button { width: 27px; height: 14px; display: grid; place-items: center; }
.window-buttons svg { width: 8px; height: 8px; stroke: #333; }

/* Shared small parts */
.grip {
  width: 1px;
  height: 8px;
  background: repeating-linear-gradient(#aaa 0 1px, transparent 1px 3px);
}
.caret {
  flex: none;
  display: inline-block;
  border: 2px solid transparent;
  border-top-color: #d8d8d8;
  border-bottom: 0;
}
.combo {
  display: flex;
  align-items: center;
  gap: 1px;
  height: 10px;
  padding: 0 3px 0 1px;
  background: var(--field);
  color: #e4e5e7;
}
.combo svg { width: 8px; height: 8px; }
.combo select {
  flex: 1;
  min-width: 0;
  height: 10px;
  padding-left: 2px;
  appearance: none;
}
.combo::after {
  content: "";
  width: 3px;
  height: 3px;
  margin: 0 1px 2px 0;
  border: solid #b4b7bb;
  border-width: 0 1px 1px 0;
  transform: rotate(45deg);
}
.swatch { width: 8px; height: 8px; background: #fff; }
.rule { width: 28px; height: 1px; background: #d8d8d8; }
.window-model .vp-only { display: none; }

/* Quick access toolbar */
.toolbar {
  display: flex;
  align-items: center;
  height: 16px;
  padding: 0 0 1px 4px;
  background: var(--bar);
  border-top: 1px solid #46484c;
}
.toolbar .grip { margin-right: 3px; }
.tool { display: grid; place-items: center; width: 13px; height: 13px; }
.tool svg { width: 9px; height: 9px; }
.divider { width: 1px; height: 11px; margin: 0 2px 0 1px; background: #46484c; }
.combo-wide { width: 139px; margin: 0 3px 0 2px; }

/* Ribbon */
.ribbon-tabs {
  display: flex;
  height: 15px;
  padding-left: 5px;
  background: var(--dark);
}
.logo { width: 16px; height: 15px; display: grid; place-items: center; background: #4592fa; }
.logo svg { width: 9px; height: 9px; }
.ribbon-tab { min-width: 47px; padding: 0 5px 1px; font-size: 8px; color: #d4d5d8; }
.ribbon-tab.is-active { min-width: 44px; background: var(--bar); }

.ribbon {
  display: flex;
  height: 49px;
  background: var(--bar);
  overflow: hidden;
}
.ribbon > .grip { margin: 13px 3px 0 2px; }
.group { padding-top: 1px; border-right: 1px solid #242529; }
.group:last-child { border: 0; }
.group h3 { padding-top: 1px; color: #dedfe1; font-size: 6px; line-height: 8px; text-align: center; }
.tools { display: flex; height: 36px; justify-content: center; }
.big {
  display: flex;
  flex-direction: column;
  align-items: center;
  height: 36px;
  line-height: 8px;
  white-space: nowrap;
}
.big > svg { width: 18px; height: 18px; margin-bottom: 1px; }
.big > .caret { margin-top: 3px; }
.big .caret { vertical-align: middle; }
.stack { display: grid; grid-template-rows: repeat(3, 11px); align-items: center; }
.small { display: flex; align-items: center; height: 10px; white-space: nowrap; }
.small svg { width: 9px; height: 9px; }
.small .caret { margin-left: 2px; }
.row { display: flex; align-items: center; }
.row .combo { flex: 1; margin-left: 2px; }
.spread { justify-content: space-between; }

.g-draw { width: 132px; }
.g-draw .big { width: 22px; }
.g-draw .big:nth-child(2) { width: 24px; }
.g-draw .stack { width: 16px; padding-left: 1px; }
.g-modify { width: 155px; }
.g-modify .tools { padding-right: 2px; }
.g-modify .big { width: 32px; }
.g-modify .stack { width: 16px; }
.g-modify .stack:nth-child(2) { width: 36px; }
.g-modify .stack:nth-child(3) { width: 34px; }
.g-modify .stack:nth-child(5) { width: 11px; }
.g-annotations { width: 82px; }
.g-annotations .big { width: 20px; }
.g-annotations .big + .big { width: 33px; }
.g-annotations .stack { width: 16px; padding-left: 1px; }
.g-layers { width: 145px; }
.g-layers .tools { padding-right: 4px; }
.g-layers .big { width: 30px; }
.g-layers .stack { width: 103px; }
.g-blocks { width: 103px; }
.g-blocks .tools { padding-right: 2px; }
.g-blocks .big { width: 24px; }
.g-blocks .stack { width: 51px; }
.g-blocks .stack + .stack { width: 16px; }
.g-properties { width: 99px; }
.g-properties .tools { padding-right: 4px; }
.g-properties .big { width: 24px; }
.g-properties .stack { width: 64px; }
.g-groups { width: 71px; }
.g-groups .tools { padding-right: 4px; }
.g-groups .big { width: 28px; }
.g-utilities { width: 56px; }
.g-utilities .big { width: 28px; }
.g-utilities .stack { width: 16px; }
.g-compare { width: 41px; }

/* Work area */
.work { display: grid; grid-template-columns: minmax(0, 1fr) 24px; }
.doc-tabs {
  display: flex;
  align-items: center;
  height: 10px;
  padding-left: 6px;
  background: #222327;
  border-bottom: 1px solid #4a4b4f;
  font: 7px/8px "Liberation Sans", Arial, sans-serif;
}
.doc-tab { color: #8d8f93; }
.doc-tab.is-active { font-weight: 700; color: #f0f0f0; }
.doc-active { display: flex; align-items: center; height: 9px; margin-left: 5px; padding: 0 4px 0 5px; background: var(--field); }
.doc-close { padding-left: 7px; }
.doc-add { padding-left: 5px; }
.doc-tabs svg { width: 6px; height: 6px; stroke: #b9bbbe; }

.canvas { width: 100%; height: auto; background: #1a1b1f; }
.window-layout .canvas { background: #adaeae; }

.window-model {
  --wall: #e2e2e2;
  --seat: #d6d0d0;
  --desk: #99685e;
  --desk-top: #6a4a44;
  --olive: #8b8040;
  --shell: #8a7d10;
  --window: #0e6076;
  --glazing: #8fa3d4;
  --glazing-alt: #e8e8ee;
  --cyan: #1591a4;
}
.window-layout {
  --wall: #1c1c1c;
  --seat: #3a3434;
  --desk: #e6a49a;
  --desk-top: #fbe9e6;
  --olive: #8c8010;
  --shell: #b39f14;
  --window: #80d8ec;
  --glazing: #6384c4;
  --glazing-alt: #3c4878;
  --cyan: #58cbd8;
}
.wall { stroke: var(--wall); stroke-width: 3; }
.thick { stroke-width: 4; }
.olive { stroke: var(--olive); stroke-width: 3; }
.amber { stroke: #b98914; stroke-width: 3; }
.stair { fill: #c0a25c; stroke: none; opacity: .8; }
.desk { stroke: var(--desk); stroke-width: 2; }
.top { fill: var(--desk-top); }
.seat { stroke: var(--seat); stroke-width: 5; stroke-dasharray: 5 5; }
.shell { stroke: var(--shell); stroke-width: 4; }
.glazing { stroke: var(--glazing); stroke-width: 5; }
.alt { stroke: var(--glazing-alt); }
.cyan { stroke: var(--cyan); stroke-width: 2; }
.arc { stroke: #2484a4; stroke-width: 3; }
.pane { stroke: var(--window); stroke-width: 7; }
.thin { stroke-width: 3; }

.paper { fill: #fbfbfb; stroke: #5c5c5c; }
.margin { stroke: #777; stroke-dasharray: 10 8; }
.viewport { stroke: #666; }
.cursor-x { stroke: #b05a5a; }
.cursor-y { stroke: #1f9a62; }
.cursor-box { stroke: #ddd; }
.window-layout .cursor-x, .window-layout .cursor-y { stroke: #6fb6c4; }
.window-layout .cursor-box { stroke: #555; }
.ucs text { fill: #333; stroke: none; font: 8px "Liberation Sans", Arial, sans-serif; }
.ucs .ucs-ty { fill: #2fb878; font-size: 7px; }
.ucs .ucs-tx { fill: #e88c84; font-size: 7px; }
.ucs-y { stroke: #2fb878; }
.ucs-x { stroke: #e88c84; }
.ucs-k { stroke: #444; }

.layout-tabs {
  display: flex;
  align-items: center;
  gap: 1px;
  height: 12px;
  background: var(--bar);
  border-bottom: 1px solid #44474b;
  color: #a0a2a6;
}
.layout-tabs > button { height: 9px; padding: 0 2px; line-height: 9px; }
.layout-tabs > .is-active { padding: 0 1px; background: var(--field); color: #fff; font-weight: 700; }
.layout-nav { display: flex; }
.layout-nav button { display: grid; place-items: center; width: 10px; height: 9px; background: #1c1d21; border-right: 1px solid #4a4c50; }
.layout-nav svg { width: 7px; height: 7px; fill: #fff; stroke: none; }
.layout-nav .outline { fill: none; stroke: #a0a2a6; }

.console {
  display: grid;
  grid-template-columns: 5px minmax(0, 1fr) 9px;
  background: #2f3336;
}
.gutter { display: flex; flex-direction: column; align-items: center; gap: 16px; padding-top: 3px; }
.gutter svg { width: 4px; height: 4px; }
.log {
  height: 44px;
  padding: 6px 3px 0;
  background: #828282;
  color: #f0f0f0;
  font: 7px/9px "Liberation Mono", monospace;
  border-bottom: 1px solid #9a9a9a;
}
.scrollbar { display: flex; flex-direction: column; background: #f2f2f2; }
.scrollbar button { height: 9px; }
.scrollbar svg { width: 9px; height: 9px; stroke: #444; }
.thumb { height: 10px; margin: auto 0 4px; background: #cdcdcd; }
.prompt {
  grid-column: 1 / -1;
  height: 13px;
  padding-left: 5px;
  color: #d0d0d0;
  font: 7px/12px "Liberation Mono", monospace;
  white-space: pre;
}
.prompt input { width: 200px; height: 12px; font-style: italic; }
.prompt input::placeholder { color: #b4b6b8; opacity: 1; }

.side { display: flex; flex-direction: column; background: var(--bar); }
.dots { height: 5px; background: repeating-linear-gradient(90deg, #999 0 1px, transparent 1px 2px) no-repeat 8px 1px / 7px 1px; }
.side-buttons { flex: 1; display: flex; flex-direction: column; padding-right: 2px; background: var(--dark); border-left: 1px solid #3c3e42; }
.side-buttons button { display: grid; place-items: center; height: 26px; }
.side-buttons svg { width: 12px; height: 12px; stroke: #9a9b9e; }

/* Status bar */
.status {
  display: grid;
  grid-template-columns: 1fr 96px 28px 22px 26px 20px 18px 24px 22px 22px 26px 15px 16px 13px 19px 14px 19px 12px 14px 24px 17px 8px 20px;
  align-items: end;
  height: 10px;
  background: #131418;
  color: #e2e3e5;
  line-height: 9px;
}
.status-layout { grid-template-columns: 1fr 70px 28px 23px 25px 19px 19px 24px 22px 22px 25px 16px 30px 13px 19px 14px 19px 12px 14px 24px 17px 8px 20px; }
.status button { height: 9px; padding: 0 1px; border-left: 1px solid #8c8e92; text-align: center; white-space: nowrap; }
.status .coords { padding-right: 2px; text-align: right; }
.status .off { color: #414348; }
.status b { display: block; background: var(--field); }
.ready { padding-left: 1px; }
.status .caret { margin: 0 0 1px 1px; }
.resize {
  width: 5px;
  height: 5px;
  margin: 4px 1px 0 auto;
  background: repeating-linear-gradient(135deg, transparent 0 1px, #b8b8b8 1px 2px);
  clip-path: polygon(100% 0, 100% 100%, 0 100%);
}
```
FILE: app.js
```js
// Fill every slot with a copy of the template it names.
document.querySelectorAll("[data-template]").forEach((slot) => {
  const source = document.getElementById(slot.dataset.template);
  slot.append(source.content.cloneNode(true));
});
```
